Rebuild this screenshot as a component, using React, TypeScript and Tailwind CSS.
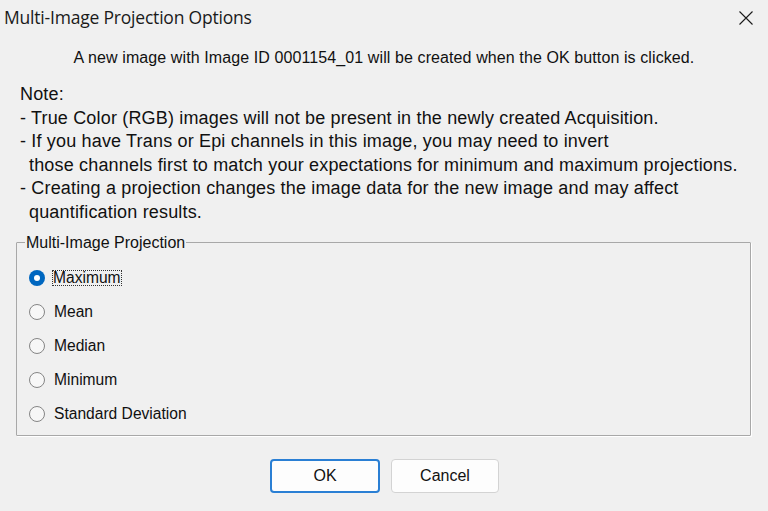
import React from "react";

const sans = "font-['Liberation_Sans',Arial,sans-serif]";

function Radio({ checked, label }: { checked?: boolean; label: string }) {
  return (
    <div className="h-[34px] flex items-center">
      {checked ? (
        <span className="ml-[12px] w-[16px] h-[16px] rounded-full bg-[#0067c0] flex items-center justify-center">
          <span className="w-[6px] h-[6px] rounded-full bg-white" />
        </span>
      ) : (
        <span className="ml-[12px] w-[16px] h-[16px] rounded-full border border-[#858585] bg-[#f7f7f7]" />
      )}
      <span
        className={
          "ml-[7px] text-[15.6px] leading-[16px] text-[#111] px-[1px] " +
          (checked ? "outline outline-1 outline-dotted outline-[#333] -outline-offset-1" : "border border-transparent")
        }
      >
        {label}
      </span>
    </div>
  );
}

export default function App() {
  return (
    <div className={"w-[768px] h-[511px] bg-[#f0f0f0] flex flex-col text-black " + sans}>
      <div className="h-[34px] flex items-center justify-between pl-[4px] pr-[15px]">
        <span className="font-['Open_Sans',sans-serif] text-[17.5px] text-[#1a1a1a] tracking-[-0.2px]">
          Multi-Image Projection Options
        </span>
        <svg width="14" height="14" viewBox="0 0 14 14" className="mt-[1px]">
          <path d="M0.5 0.5 L13.5 13.5 M13.5 0.5 L0.5 13.5" stroke="#1a1a1a" strokeWidth="1.1" />
        </svg>
      </div>
      <div className="mt-[12px] h-[24px] leading-[24px] text-center text-[16px] tracking-[0.1px] text-[#111]">
        A new image with Image ID 0001154_01 will be created when the OK button is clicked.
      </div>
      <div className="mt-[13px] ml-[20px] text-[18px] tracking-[0.17px] leading-[23.6px] text-[#111]">
        <div>Note:</div>
        <div>- True Color (RGB) images will not be present in the newly created Acquisition.</div>
        <div>- If you have Trans or Epi channels in this image, you may need to invert</div>
        <div className="pl-[9px]">those channels first to match your expectations for minimum and maximum projections.</div>
        <div>- Creating a projection changes the image data for the new image and may affect</div>
        <div className="pl-[9px]">quantification results.</div>
      </div>
      <fieldset className="mt-[8px] ml-[16px] w-[735px] h-[203px] border border-[#a8a8a8] rounded-[1px] shadow-[1px_1px_0_#ffffff]">
        <legend className="ml-[8px] px-[1px] text-[16px] leading-[20px] text-[#111]">Multi-Image Projection</legend>
        <div className="pt-[8px] flex flex-col">
          <Radio checked label="Maximum" />
          <Radio label="Mean" />
          <Radio label="Median" />
          <Radio label="Minimum" />
          <Radio label="Standard Deviation" />
        </div>
      </fieldset>
      <div className="mt-[23px] flex justify-center gap-[11px] pl-[1px]">
        <button className="w-[110px] h-[34px] rounded-[4px] border-2 border-[#2a7fd4] bg-[#fdfdfd] text-[16px] text-[#111]">
          OK
        </button>
        <button className="w-[108px] h-[34px] rounded-[4px] border border-[#d3d3d3] bg-[#fdfdfd] text-[16px] text-[#111]">
          Cancel
        </button>
      </div>
    </div>
  );
}
